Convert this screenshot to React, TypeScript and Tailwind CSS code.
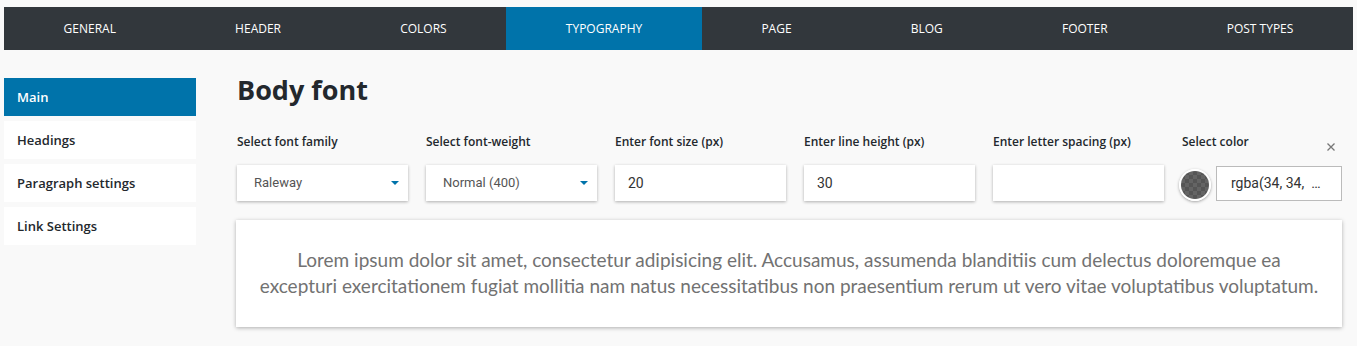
import React, { useState } from 'react';

const tabs = ['General', 'Header', 'Colors', 'Typography', 'Page', 'Blog', 'Footer', 'Post types'];
const sections = ['Main', 'Headings', 'Paragraph settings', 'Link Settings'];

const ui = { fontFamily: '"Open Sans", "Noto Sans", sans-serif' };
const field = { fontFamily: 'Roboto, "Noto Sans", sans-serif' };

function Caret() {
  return (
    <svg width="8" height="4" viewBox="0 0 8 4" className="shrink-0">
      <path d="M0 0h8L4 4z" fill="#0073aa" />
    </svg>
  );
}

function Swatch() {
  return (
    <div className="w-[32px] h-[32px] rounded-full border-2 border-white shadow-[0_1px_3px_rgba(0,0,0,0.35)] overflow-hidden shrink-0">
      <svg width="28" height="28" viewBox="0 0 28 28">
        <defs>
          <pattern id="checker" width="8" height="8" patternUnits="userSpaceOnUse">
            <rect width="8" height="8" fill="#555555" />
            <rect width="4" height="4" fill="#646464" />
            <rect x="4" y="4" width="4" height="4" fill="#646464" />
          </pattern>
        </defs>
        <rect width="28" height="28" fill="url(#checker)" />
      </svg>
    </div>
  );
}

export default function App() {
  const [activeTab, setActiveTab] = useState('Typography');
  const [activeSection, setActiveSection] = useState('Main');

  return (
    <div className="min-h-[346px] bg-[#f9f9f9] pt-[7px] px-[4px]" style={ui}>
      {/* top tabs */}
      <nav className="flex h-[43px] bg-[#32373c]">
        {tabs.map(tab => (
          <button
            key={tab}
            onClick={() => setActiveTab(tab)}
            className={`flex-auto flex items-center justify-center text-[12px] uppercase text-white ${
              activeTab === tab ? 'bg-[#0073aa]' : ''
            }`}
          >
            {tab}
          </button>
        ))}
      </nav>

      <div className="flex">
        {/* sidebar */}
        <aside className="w-[192px] shrink-0 mt-[28px] flex flex-col gap-[5px]">
          {sections.map(s => (
            <button
              key={s}
              onClick={() => setActiveSection(s)}
              className={`h-[38px] px-[13px] pt-[2px] text-left text-[13px] font-semibold ${
                activeSection === s ? 'bg-[#0073aa] text-white' : 'bg-white text-[#23282d]'
              }`}
            >
              {s}
            </button>
          ))}
        </aside>

        {/* main panel */}
        <main className="flex-1 ml-[41px] pr-[11px] pt-[24px]">
          <h1 className="text-[27px] leading-[32px] font-bold text-[#23282d]">Body font</h1>

          <div className="flex gap-[18px] mt-[28px]">
            <div className="w-[171px] shrink-0">
              <label className="block text-[12px] leading-[16px] font-semibold text-[#23282d]">Select font family</label>
              <div className="mt-[15px] h-[36px] bg-white shadow-[0_1px_3px_rgba(0,0,0,0.3)] flex items-center justify-between pl-[17px] pr-[9px] text-[13px] text-[#555]" style={field}>
                <span>Raleway</span>
                <Caret />
              </div>
            </div>
            <div className="w-[171px] shrink-0">
              <label className="block text-[12px] leading-[16px] font-semibold text-[#23282d]">Select font-weight</label>
              <div className="mt-[15px] h-[36px] bg-white shadow-[0_1px_3px_rgba(0,0,0,0.3)] flex items-center justify-between pl-[17px] pr-[9px] text-[13px] text-[#555]" style={field}>
                <span>Normal (400)</span>
                <Caret />
              </div>
            </div>
            <div className="w-[171px] shrink-0">
              <label className="block text-[12px] leading-[16px] font-semibold text-[#23282d]">Enter font size (px)</label>
              <div className="mt-[15px] h-[36px] bg-white shadow-[0_1px_3px_rgba(0,0,0,0.3)] flex items-center px-[13px] text-[14px] text-[#333]" style={field}>
                20
              </div>
            </div>
            <div className="w-[171px] shrink-0">
              <label className="block text-[12px] leading-[16px] font-semibold text-[#23282d]">Enter line height (px)</label>
              <div className="mt-[15px] h-[36px] bg-white shadow-[0_1px_3px_rgba(0,0,0,0.3)] flex items-center px-[13px] text-[14px] text-[#333]" style={field}>
                30
              </div>
            </div>
            <div className="w-[171px] shrink-0">
              <label className="block text-[12px] leading-[16px] font-semibold text-[#23282d]">Enter letter spacing (px)</label>
              <div className="mt-[15px] h-[36px] bg-white shadow-[0_1px_3px_rgba(0,0,0,0.3)]" />
            </div>
            <div className="flex-1">
              <div className="h-[16px] flex items-start justify-between">
                <label className="block text-[12px] leading-[16px] font-semibold text-[#23282d]">Select color</label>
                <svg width="10" height="10" viewBox="0 0 10 10" className="mt-[8px] mr-[6px]">
                  <path d="M1.5 1.5l7 7M8.5 1.5l-7 7" stroke="#777" strokeWidth="1.3" />
                </svg>
              </div>
              <div className="mt-[15px] h-[36px] flex items-end gap-[5px] -ml-[3px]">
                <Swatch />
                <div className="flex-1 h-[35px] bg-white border border-[#bbb] flex items-center pl-[14px] text-[14px] text-[#333] whitespace-nowrap" style={field}>
                  rgba(34, 34, {'\u00a0'}…
                </div>
              </div>
            </div>
          </div>

          {/* preview */}
          <div
            className="mt-[19px] -ml-[1px] bg-white shadow-[0_1px_4px_rgba(0,0,0,0.3)] pt-[27px] pb-[28px] text-center text-[19px] leading-[26px] text-[#727272]"
            style={{ fontFamily: 'Lato, "Noto Sans", sans-serif' }}
          >
            Lorem ipsum dolor sit amet, consectetur adipisicing elit. Accusamus, assumenda blanditiis cum delectus doloremque ea
            <br />
            excepturi exercitationem fugiat mollitia nam natus necessitatibus non praesentium rerum ut vero vitae voluptatibus voluptatum.
          </div>
        </main>
      </div>
    </div>
  );
}
